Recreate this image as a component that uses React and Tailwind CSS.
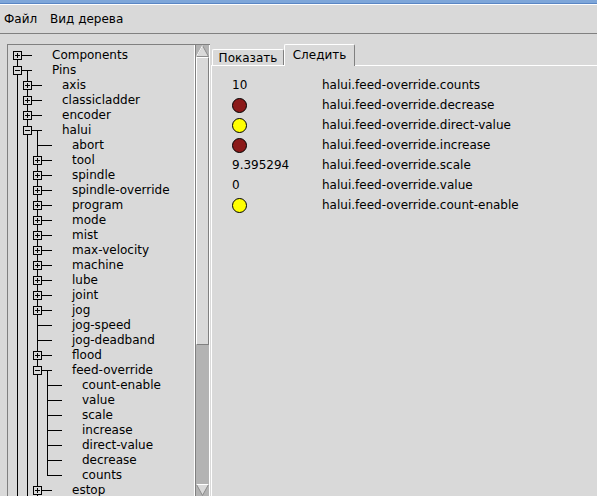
import React from 'react';

const tree = [
  { label: 'Components', closed: true },
  {
    label: 'Pins',
    open: true,
    children: [
      { label: 'axis', closed: true },
      { label: 'classicladder', closed: true },
      { label: 'encoder', closed: true },
      {
        label: 'halui',
        open: true,
        children: [
          { label: 'abort' },
          { label: 'tool', closed: true },
          { label: 'spindle', closed: true },
          { label: 'spindle-override', closed: true },
          { label: 'program', closed: true },
          { label: 'mode', closed: true },
          { label: 'mist', closed: true },
          { label: 'max-velocity', closed: true },
          { label: 'machine', closed: true },
          { label: 'lube', closed: true },
          { label: 'joint', closed: true },
          { label: 'jog', closed: true },
          { label: 'jog-speed' },
          { label: 'jog-deadband' },
          { label: 'flood', closed: true },
          {
            label: 'feed-override',
            open: true,
            children: [
              { label: 'count-enable' },
              { label: 'value' },
              { label: 'scale' },
              { label: 'increase' },
              { label: 'direct-value' },
              { label: 'decrease' },
              { label: 'counts' },
            ],
          },
          { label: 'estop', closed: true },
          { label: 'home' },
        ],
      },
      { label: 'iocontrol', closed: true },
    ],
  },
  { label: 'Signals', closed: true },
];

function flatten(nodes, level, guides, out) {
  nodes.forEach((n, i) => {
    const hasNext = i < nodes.length - 1;
    out.push({ ...n, level, guides, hasNext, first: level === 0 && i === 0 });
    if (n.open && n.children) flatten(n.children, level + 1, [...guides, hasNext], out);
  });
  return out;
}

const rows = flatten(tree, 0, [], []);

const watches = [
  { value: '10', name: 'halui.feed-override.counts' },
  { led: 'bg-[#8b1a1a]', name: 'halui.feed-override.decrease' },
  { led: 'bg-[#ffff00]', name: 'halui.feed-override.direct-value' },
  { led: 'bg-[#8b1a1a]', name: 'halui.feed-override.increase' },
  { value: '9.395294', name: 'halui.feed-override.scale' },
  { value: '0', name: 'halui.feed-override.value' },
  { led: 'bg-[#ffff00]', name: 'halui.feed-override.count-enable' },
];

// column of the connector for a level, in row-svg pixels
const col = (k) => 9 + 10 * k;

function TreeRow({ row }) {
  const { level, guides, hasNext, first, open, closed } = row;
  const cx = col(level);
  const x = cx + 0.5;
  return (
    <div className="flex h-[15px] items-center whitespace-nowrap">
      <svg width={44 + 10 * level} height={15} className="shrink-0">
        {guides.map((g, k) =>
          g ? <line key={k} x1={col(k) + 0.5} y1={0} x2={col(k) + 0.5} y2={15} stroke="#000" /> : null
        )}
        {!first && <line x1={x} y1={0} x2={x} y2={8} stroke="#000" />}
        {hasNext && <line x1={x} y1={7} x2={x} y2={15} stroke="#000" />}
        <line x1={cx} y1={7.5} x2={cx + 15} y2={7.5} stroke="#000" />
        {open && <line x1={col(level + 1) + 0.5} y1={7} x2={col(level + 1) + 0.5} y2={15} stroke="#000" />}
        {(open || closed) && (
          <g>
            <rect x={cx - 3.5} y={3.5} width={8} height={8} fill="#d9d9d9" stroke="#000" />
            <line x1={cx - 2} y1={7.5} x2={cx + 3} y2={7.5} stroke="#000" />
            {closed && <line x1={x} y1={5} x2={x} y2={10} stroke="#000" />}
          </g>
        )}
      </svg>
      <span className="leading-[15px]">{row.label}</span>
    </div>
  );
}

function Arrow({ down }) {
  return (
    <svg width={13} height={12} className="shrink-0">
      {down ? (
        <g>
          <polygon points="0.5,0.5 12.5,0.5 6.5,11.5" fill="#d9d9d9" stroke="#8c8c8c" />
          <line x1={0.5} y1={0.5} x2={12.5} y2={0.5} stroke="#fff" />
        </g>
      ) : (
        <g>
          <polygon points="6.5,0.5 12.5,11.5 0.5,11.5" fill="#d9d9d9" stroke="#8c8c8c" />
          <line x1={6.5} y1={0.5} x2={0.5} y2={11.5} stroke="#fff" />
        </g>
      )}
    </svg>
  );
}

export default function App() {
  return (
    <div className="flex h-[496px] w-[597px] flex-col overflow-hidden bg-[#d9d9d9] font-['DejaVu_Sans',sans-serif] text-[12px] text-black">
      <div className="h-[3px] bg-[#7ea6d9]" />
      <div className="h-px bg-[#5a86c4]" />
      <div className="flex h-[30px] items-center border-t border-b border-t-white border-b-[#808080]">
        <span className="w-[50px] pl-[4px]">Файл</span>
        <span>Вид дерева</span>
      </div>

      <div className="flex min-h-0 flex-1 pt-[10px] pl-[7px]">
        <div className="flex h-[452px] border-t border-l border-[#808080]">
          <div className="w-[187px] overflow-hidden border-r border-white pt-[3px]">
            {rows.map((r, i) => (
              <TreeRow key={i} row={r} />
            ))}
          </div>
          <div className="flex w-[15px] flex-col items-center border-l border-r border-l-[#808080] border-r-white bg-[#b3b3b3]">
            <Arrow />
            <div className="h-[288px] w-full border-t border-l border-r border-b border-t-white border-l-white border-r-[#808080] border-b-[#808080] bg-[#d9d9d9]" />
            <div className="flex-1" />
            <Arrow down />
          </div>
        </div>

        <div className="ml-px flex flex-1 flex-col">
          <div className="flex h-[21px] items-end pl-px">
            <div className="flex h-[16px] w-[72px] items-center justify-center rounded-tl-[2px] rounded-tr-[2px] border-t border-l border-r border-t-white border-l-white border-r-[#808080]">
              Показать
            </div>
            <div className="relative z-10 -mb-px flex h-[22px] w-[71px] items-center justify-center rounded-tl-[2px] rounded-tr-[2px] border-t border-l border-r border-t-white border-l-white border-r-[#808080] bg-[#d9d9d9] pb-[2px]">
              Следить
            </div>
          </div>
          <div className="flex-1 border-t border-l border-white pt-[9px] pl-[20px]">
            {watches.map((w, i) => (
              <div key={i} className="flex h-[20px] items-center whitespace-nowrap">
                <div className="w-[90px]">
                  {w.led ? (
                    <div className={`h-[15px] w-[15px] rounded-full border border-black ${w.led}`} />
                  ) : (
                    w.value
                  )}
                </div>
                <span>{w.name}</span>
              </div>
            ))}
          </div>
        </div>
      </div>
    </div>
  );
}
